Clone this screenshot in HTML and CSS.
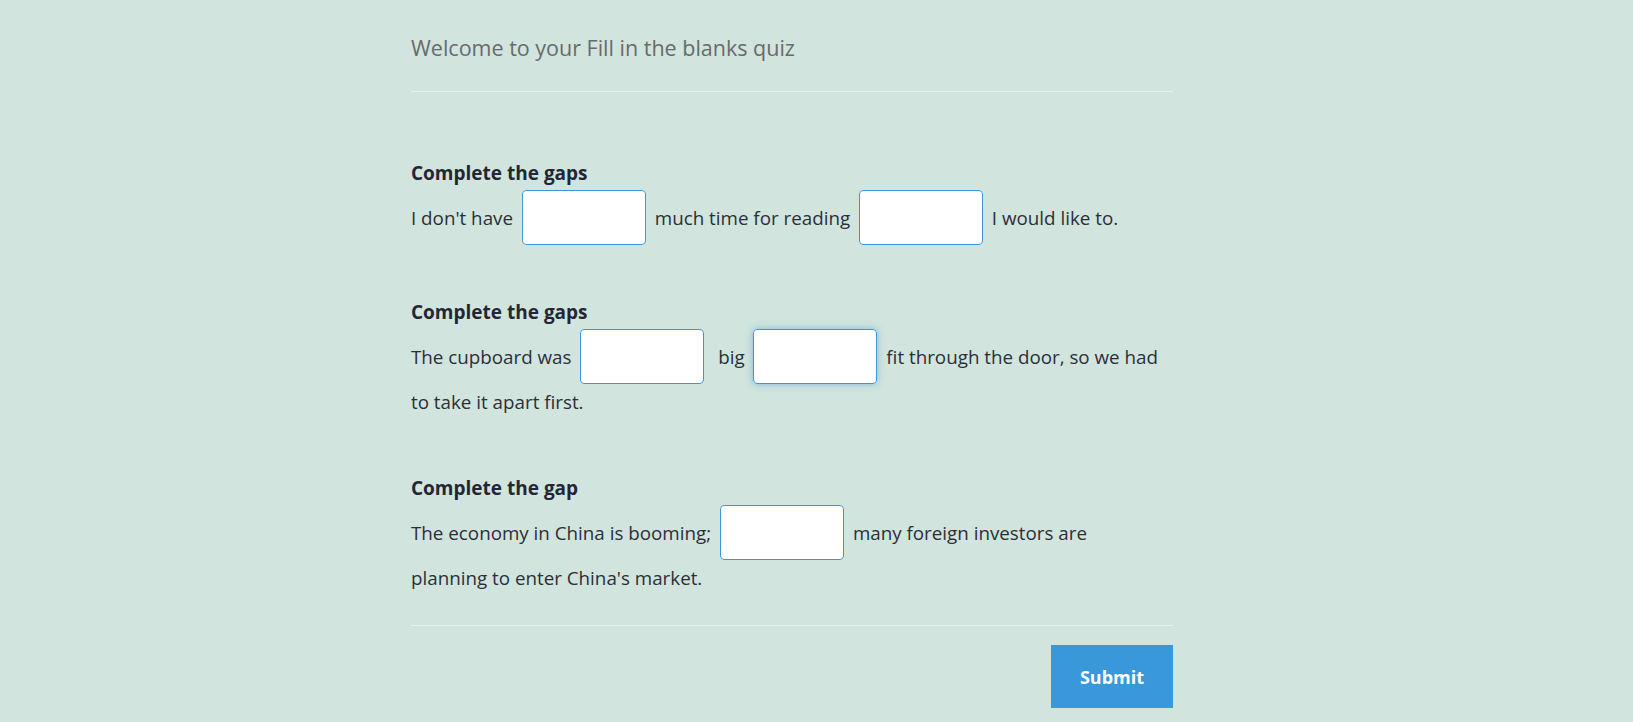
FILE: index.html
```html
<!DOCTYPE html>
<html lang="en">
<head>
<meta charset="utf-8">
<title>Fill in the blanks quiz</title>
<link rel="stylesheet" href="styles.css">
</head>
<body>
<main class="quiz">
  <h1 class="quiz-title">Welcome to your Fill in the blanks quiz</h1>
  <hr class="rule">
  <section class="questions">
    <div class="question">
      <h2 class="question-label">Complete the gaps</h2>
      <p class="question-text">I don't have <span class="gap"><input type="text" class="gap-input"></span> much time for reading <span class="gap"><input type="text" class="gap-input"></span> I would like to.</p>
    </div>
    <div class="question">
      <h2 class="question-label">Complete the gaps</h2>
      <p class="question-text">The cupboard was <span class="gap"><input type="text" class="gap-input"></span> &nbsp;big <span class="gap is-focused"><input type="text" class="gap-input"></span> fit through the door, so we had to take it apart first.</p>
    </div>
    <div class="question">
      <h2 class="question-label">Complete the gap</h2>
      <p class="question-text">The economy in China is booming; <span class="gap"><input type="text" class="gap-input"></span> many foreign investors are planning to enter China's market.</p>
    </div>
  </section>
  <hr class="rule rule-bottom">
  <div class="actions">
    <button type="button" class="submit-btn">Submit</button>
  </div>
</main>
</body>
</html>
```

FILE: styles.css
```css
html, body {
  margin: 0;
  padding: 0;
  background: #d1e4de;
}

body {
  font-family: "Open Sans", "Noto Sans", "Liberation Sans", sans-serif;
  color: #2c2f38;
}

.quiz {
  width: 762px;
  margin: 0 auto;
  padding: 32px 49px 0 0;
}

.quiz-title {
  margin: 0;
  font-size: 21.5px;
  line-height: 32px;
  font-weight: 400;
  color: #686b6b;
}

.rule {
  margin: 27px 0 0;
  border: 0;
  border-top: 1px solid #eaf2ef;
  height: 0;
}

.questions {
  padding-top: 64px;
  display: flex;
  flex-direction: column;
  gap: 50px;
}

.question-label {
  margin: 0;
  font-size: 19px;
  line-height: 34px;
  font-weight: 700;
  color: #232733;
}

.question-text {
  margin: 0;
  padding-right: 10px;
  font-size: 18.8px;
  line-height: 37px;
}

/* wrapper: overflow hidden puts its baseline at the bottom edge,
   so vertical-align sets where the box sits against the text */
.gap {
  display: inline-block;
  overflow: hidden;
  margin: 0 4px;
  border-radius: 4px;
  vertical-align: -20px;
}

.gap.is-focused {
  box-shadow: 0 0 7px rgba(58, 151, 217, 0.55);
}

.gap-input {
  display: block;
  box-sizing: border-box;
  width: 124px;
  height: 55px;
  margin: 0;
  padding: 0 10px;
  border: 1px solid #3a97d9;
  border-radius: 4px;
  background: #ffffff;
  font: inherit;
  outline: none;
}

.rule-bottom {
  margin-top: 28px;
}

.actions {
  display: flex;
  justify-content: flex-end;
  padding-top: 19px;
}

.submit-btn {
  width: 122px;
  height: 63px;
  border: 0;
  border-radius: 0;
  background: #3898d9;
  color: #ffffff;
  font-family: "Open Sans", "Noto Sans", "Liberation Sans", sans-serif;
  font-size: 18px;
  font-weight: 700;
  cursor: pointer;
}
```
